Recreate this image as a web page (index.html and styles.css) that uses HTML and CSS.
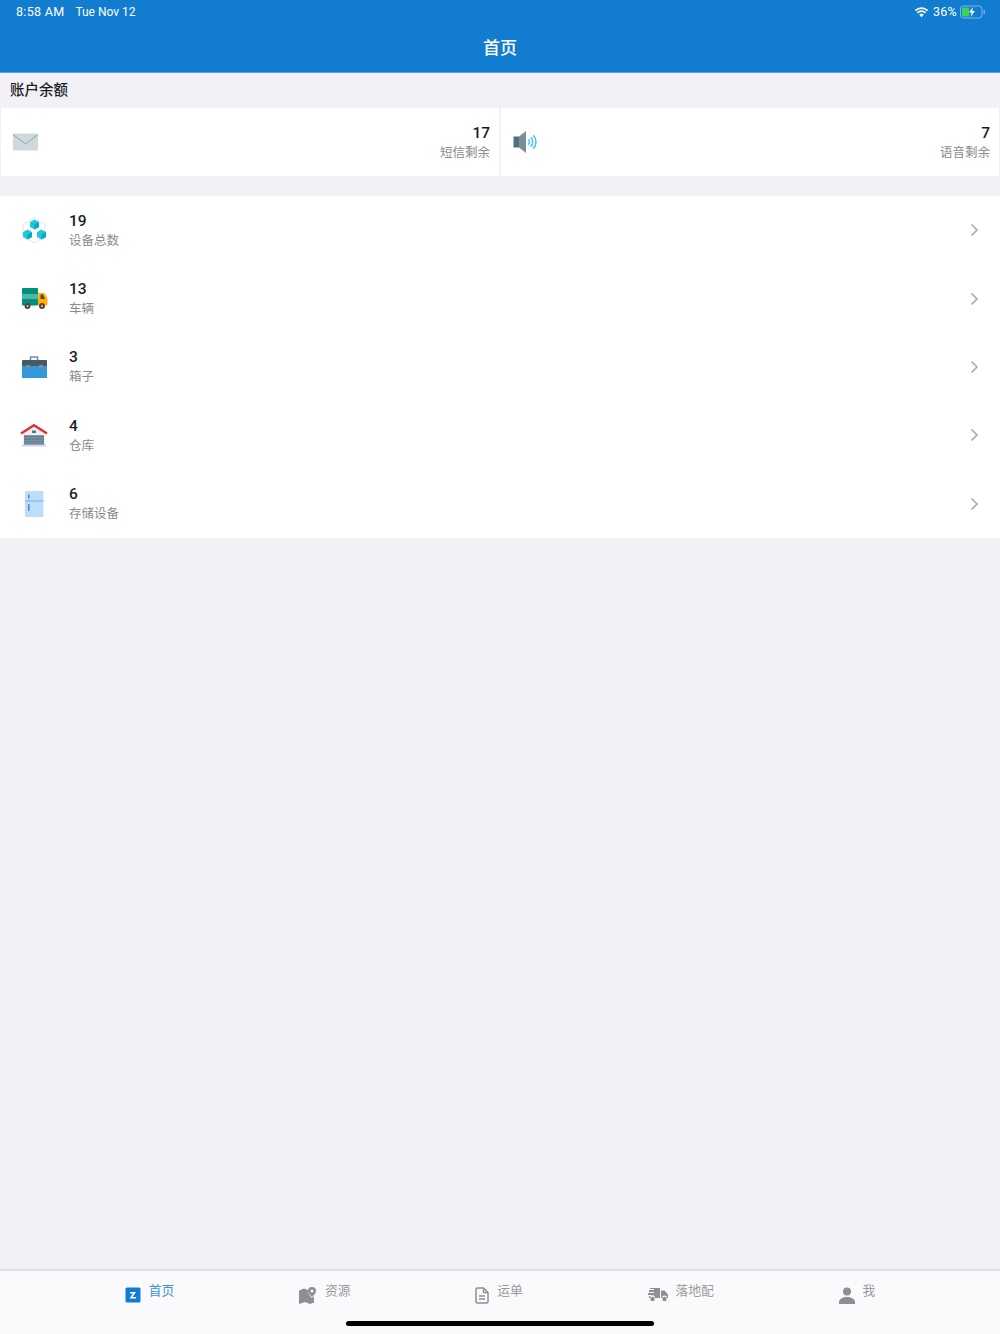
FILE: index.html
```html
<!DOCTYPE html>
<html lang="zh-CN">
<head>
  <meta charset="UTF-8">
  <meta name="viewport" content="width=device-width, initial-scale=1.0">
  <title>首页</title>
  <link rel="stylesheet" href="styles.css">
</head>
<body>
<div class="app">
  <header class="top-bar">
    <div class="status-bar">
      <div class="status-left"><span>8:58 AM</span><span class="status-date">Tue Nov 12</span></div>
      <div class="status-right">
        <svg class="wifi" width="15" height="12" viewBox="0 0 16 12">
          <path d="M8 11.500 5.600 8.900a3.400 3.400 0 0 1 4.800 0z" fill="#fff"/>
          <path d="M3.700 6.900a6.100 6.100 0 0 1 8.600 0M1.500 4.500a9.200 9.200 0 0 1 13 0" fill="none" stroke="#fff" stroke-width="1.900"/>
        </svg>
        <span>36%</span>
        <svg class="battery" width="25" height="14" viewBox="0 0 25 14">
          <rect x="0.500" y="1" width="21.500" height="12" rx="3" fill="none" stroke="#7fb4e4"/>
          <rect x="2" y="2.500" width="7" height="9" rx="1" fill="#3ed45a"/>
          <rect x="23.500" y="5" width="1.500" height="4" rx="0.700" fill="#7fb4e4"/>
          <path d="M13 2 9 7.600h2.600L10.500 12l4.400-6h-2.600z" fill="#fff"/>
        </svg>
      </div>
    </div>
    <h1 class="page-title">首页</h1>
  </header>

  <main class="content">
    <div class="section-title">账户余额</div>
    <div class="balance">
      <div class="balance-card">
        <svg width="25" height="18" viewBox="0 0 25 18">
          <rect x="0" y="0.500" width="25" height="17" rx="1.500" fill="#cfd8dc"/>
          <path d="M0 1.500 12.500 11 25 1.500" fill="none" stroke="#90a4ae" stroke-width="1"/>
        </svg>
        <div class="balance-text">
          <div class="num">17</div>
          <div class="label">短信剩余</div>
        </div>
      </div>
      <div class="balance-card">
        <svg width="25" height="24" viewBox="0 0 25 24">
          <rect x="0.500" y="6.500" width="5.500" height="11" fill="#546e7a"/>
          <path d="M6 6.500 13 1v22l-7-5.500z" fill="#78909c"/>
          <path d="M15.300 9.300a3.800 3.800 0 0 1 0 5.400M17.800 7.300a6.800 6.800 0 0 1 0 9.400M20.300 5.300a9.800 9.800 0 0 1 0 13.400" fill="none" stroke="#4fc3f7" stroke-width="1.600"/>
        </svg>
        <div class="balance-text">
          <div class="num">7</div>
          <div class="label">语音剩余</div>
        </div>
      </div>
    </div>

    <div class="list">
      <div class="row">
        <svg class="row-icon" width="28" height="28" viewBox="0 0 28 28">
          <path d="M14 2 25 8.500v12L14 27 3 20.500v-12z" fill="none" stroke="#dfe5e8" stroke-width="1"/>
          <path d="M14.500 3.500l4.500 2.500v5l-4.500 2.500L10 11V6z" fill="#26c6da"/>
          <path d="M14.500 8.500 19 6v5l-4.500 2.500z" fill="#00acc1"/>
          <path d="M7.500 13.500l4.500 2.500v5l-4.500 2.500L3 21v-5z" fill="#26c6da"/>
          <path d="M7.500 18.500 12 16v5l-4.500 2.500z" fill="#00acc1"/>
          <path d="M21.500 13.500l4.500 2.500v5l-4.500 2.500L17 21v-5z" fill="#26c6da"/>
          <path d="M21.500 18.500 26 16v5l-4.500 2.500z" fill="#00acc1"/>
        </svg>
        <div class="row-text">
          <div class="num">19</div>
          <div class="label">设备总数</div>
        </div>
        <svg class="chevron" width="9" height="14" viewBox="0 0 9 14"><path d="M1.500 1.500 7 7l-5.500 5.500" fill="none" stroke="#a9acb0" stroke-width="1.700"/></svg>
      </div>
      <div class="row">
        <svg class="row-icon" width="28" height="24" viewBox="0 0 28 24">
          <rect x="2" y="1" width="16" height="17.500" rx="1" fill="#00917c"/>
          <rect x="2" y="7" width="16" height="5" fill="#4db6a6"/>
          <path d="M18 6h5.500c.8 0 1.300.4 1.700 1l2.300 4.500V17a1.500 1.500 0 0 1-1.500 1.500H18z" fill="#ffb300"/>
          <path d="M20.500 7.500h2.500l2 4.500h-4.500z" fill="#5d4037"/>
          <circle cx="7.500" cy="19" r="3" fill="#5d4037"/><circle cx="7.500" cy="19" r="1" fill="#d7ccc8"/>
          <circle cx="22" cy="19" r="3" fill="#5d4037"/><circle cx="22" cy="19" r="1" fill="#d7ccc8"/>
        </svg>
        <div class="row-text">
          <div class="num">13</div>
          <div class="label">车辆</div>
        </div>
        <svg class="chevron" width="9" height="14" viewBox="0 0 9 14"><path d="M1.500 1.500 7 7l-5.500 5.500" fill="none" stroke="#a9acb0" stroke-width="1.700"/></svg>
      </div>
      <div class="row">
        <svg class="row-icon" width="28" height="24" viewBox="0 0 28 24">
          <path d="M10.500 5V2h7v3" fill="none" stroke="#78909c" stroke-width="1.600"/>
          <rect x="2" y="5" width="25" height="7" rx="1" fill="#455a64"/>
          <rect x="2" y="11" width="25" height="12" fill="#3498db"/>
          <rect x="6" y="10" width="4" height="3.500" fill="#78909c"/>
          <rect x="19" y="10" width="4" height="3.500" fill="#78909c"/>
        </svg>
        <div class="row-text">
          <div class="num">3</div>
          <div class="label">箱子</div>
        </div>
        <svg class="chevron" width="9" height="14" viewBox="0 0 9 14"><path d="M1.500 1.500 7 7l-5.500 5.500" fill="none" stroke="#a9acb0" stroke-width="1.700"/></svg>
      </div>
      <div class="row">
        <svg class="row-icon" width="28" height="24" viewBox="0 0 28 24">
          <path d="M3 9.500 14 2.500l11 7V23H3z" fill="#f3eee9"/>
          <path d="M1 10.500 14 2.200l13 8.300" fill="none" stroke="#d9323c" stroke-width="2.400"/>
          <rect x="12" y="7.500" width="4" height="2.500" fill="#2f7fc1"/>
          <rect x="4" y="12.300" width="20" height="10.500" fill="#607d8b"/>
          <path d="M4 14.800h20M4 17.300h20M4 19.800h20" stroke="#90a4ae" stroke-width="0.800"/>
          <rect x="2" y="21.500" width="24" height="2" fill="#cdd3ee"/>
        </svg>
        <div class="row-text">
          <div class="num">4</div>
          <div class="label">仓库</div>
        </div>
        <svg class="chevron" width="9" height="14" viewBox="0 0 9 14"><path d="M1.500 1.500 7 7l-5.500 5.500" fill="none" stroke="#a9acb0" stroke-width="1.700"/></svg>
      </div>
      <div class="row">
        <svg class="row-icon" width="28" height="28" viewBox="0 0 28 28">
          <rect x="5" y="1" width="18.500" height="26" rx="1" fill="#bbdefb"/>
          <rect x="5" y="10" width="18.500" height="2" fill="#90caf9"/>
          <rect x="8" y="4.500" width="1.500" height="4" fill="#5c7fd0"/>
          <rect x="8" y="14" width="1.500" height="7" fill="#5c7fd0"/>
        </svg>
        <div class="row-text">
          <div class="num">6</div>
          <div class="label">存储设备</div>
        </div>
        <svg class="chevron" width="9" height="14" viewBox="0 0 9 14"><path d="M1.500 1.500 7 7l-5.500 5.500" fill="none" stroke="#a9acb0" stroke-width="1.700"/></svg>
      </div>
    </div>
  </main>

  <nav class="tab-bar">
    <div class="tab active">
      <svg width="16" height="16" viewBox="0 0 16 16">
        <rect width="15" height="15" y="0.500" x="0.500" rx="1.500" fill="#127cd0"/>
        <path d="M5 5h6L7.500 10H11v1.500H4.500L8 6.500H5z" fill="#fff"/>
      </svg>
      <span>首页</span>
    </div>
    <div class="tab">
      <svg width="18" height="17" viewBox="0 0 18 17">
        <path d="M0 3.500 5 1.500l4 1.500v1.500c0 2.500 2.500 5 4 6.500l2-2v6.500L11 17l-5-2-6 2z" fill="#8e8e93"/>
        <path d="M13 0a4 4 0 0 0-4 4c0 2.500 4 6 4 6s4-3.500 4-6a4 4 0 0 0-4-4zm0 5.500a1.500 1.500 0 1 1 0-3 1.500 1.500 0 0 1 0 3z" fill="#8e8e93"/>
      </svg>
      <span>资源</span>
    </div>
    <div class="tab">
      <svg width="14" height="17" viewBox="0 0 14 17">
        <path d="M1 2.500A1.500 1.500 0 0 1 2.500 1h6L13 5.500V14.500a1.500 1.500 0 0 1-1.500 1.500h-9A1.500 1.500 0 0 1 1 14.500z" fill="none" stroke="#8e8e93" stroke-width="1.500"/>
        <path d="M8.500 1v4.500H13M4 9h6M4 12h6" fill="none" stroke="#8e8e93" stroke-width="1.300"/>
      </svg>
      <span>运单</span>
    </div>
    <div class="tab">
      <svg width="20" height="15" viewBox="0 0 20 15">
        <path d="M2 1h10v10H7a2.500 2.500 0 0 0-5 0H1V9h5V8H0V6h6V5H1V3h5V2H2z" fill="#8e8e93"/>
        <path d="M13 3.500h3.500L20 7.500V11h-1a2.500 2.500 0 0 0-5 0h-1z" fill="#8e8e93"/>
        <circle cx="4.500" cy="12" r="2.200" fill="#8e8e93"/><circle cx="16.500" cy="12" r="2.200" fill="#8e8e93"/>
      </svg>
      <span>落地配</span>
    </div>
    <div class="tab">
      <svg width="16" height="17" viewBox="0 0 16 17">
        <circle cx="8" cy="4.500" r="4" fill="#8e8e93"/>
        <path d="M0 17v-2c0-3 4-5 8-5s8 2 8 5v2z" fill="#8e8e93"/>
      </svg>
      <span>我</span>
    </div>
    <div class="home-bar"></div>
  </nav>
</div>
</body>
</html>
```

FILE: styles.css
```css
* {
  box-sizing: border-box;
}

html, body {
  margin: 0;
  height: 100%;
}

body {
  font-family: Roboto, "Noto Sans CJK SC", sans-serif;
  background-color: #f1f1f6;
  color: #1d1d1f;
}

.app {
  display: flex;
  flex-direction: column;
  height: 1334px;
}

.top-bar {
  height: 73px;
  background-color: #127cd0;
  border-bottom: 1px solid #58a3de;
  color: #fff;
}

.status-bar {
  display: flex;
  justify-content: space-between;
  align-items: center;
  height: 23px;
  padding: 0 15px 0 16px;
  font-size: 12.500px;
  letter-spacing: 0.300px;
}

.status-left {
  display: flex;
  align-items: baseline;
  gap: 11px;
}

.status-date {
  font-size: 12px;
  letter-spacing: 0;
}

.status-right {
  display: flex;
  align-items: center;
  gap: 3px;
}

.wifi {
  margin-right: 1px;
}

.page-title {
  margin: 0;
  padding-top: 2px;
  height: 49px;
  line-height: 46px;
  font-size: 17px;
  font-weight: 500;
  text-align: center;
}

.content {
  flex: 1;
}

.section-title {
  height: 35px;
  padding-left: 10px;
  line-height: 36px;
  font-size: 14.500px;
  font-weight: 500;
}

.balance {
  display: flex;
  gap: 2px;
  padding: 0 1px;
}

.balance-card {
  flex: 1;
  display: flex;
  justify-content: space-between;
  align-items: center;
  height: 68px;
  padding: 0 9px 0 12px;
  background-color: #fff;
}

.balance-text {
  padding-top: 1px;
  text-align: right;
}

.num {
  font-size: 15.500px;
  font-weight: 500;
  line-height: 20px;
}

.label {
  font-size: 12.500px;
  line-height: 20px;
  color: #8a8a8e;
}

.list {
  margin-top: 20px;
  background-color: #fff;
}

.row {
  display: flex;
  align-items: center;
  height: 68.400px;
  padding-left: 20px;
  padding-right: 21px;
}

.row-icon {
  flex: none;
}

.row-text {
  flex: 1;
  margin-left: 21px;
  padding-top: 1px;
}

.chevron {
  flex: none;
}

.tab-bar {
  position: relative;
  display: flex;
  justify-content: space-evenly;
  height: 65px;
  background-color: #fafafc;
  border-top: 2px solid #e0e0e4;
}

.tab {
  display: flex;
  align-items: flex-start;
  gap: 8px;
  padding-top: 14px;
  font-size: 12.750px;
  color: #9a9a9e;
}

.tab svg {
  flex: none;
  margin-top: 2px;
}

.tab span {
  margin-top: -4px;
  line-height: 20px;
}

.tab.active {
  color: #3f95da;
}

.home-bar {
  position: absolute;
  left: 346px;
  bottom: 8px;
  width: 308px;
  height: 5px;
  border-radius: 3px;
  background-color: #000;
}
```
